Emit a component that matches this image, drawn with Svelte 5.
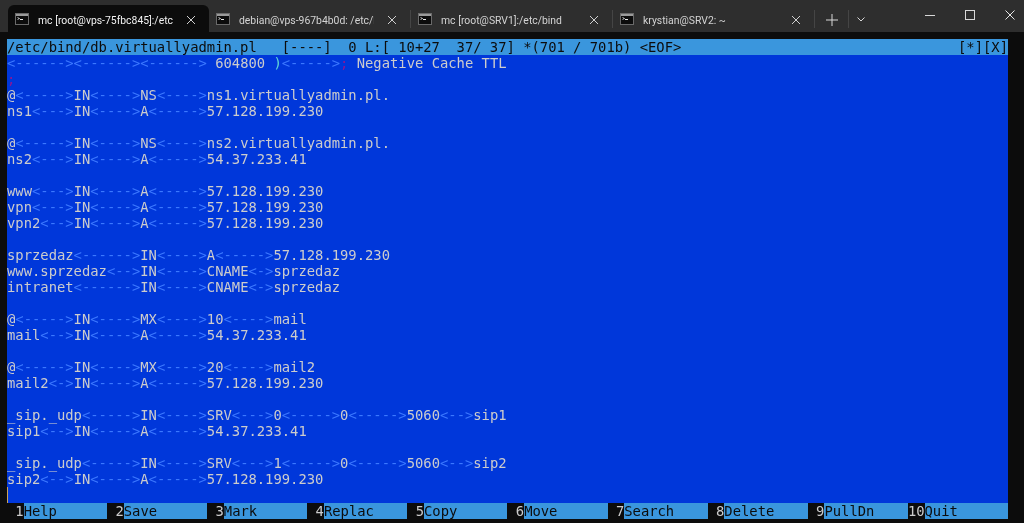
<script>
  const tabs = [
    { title: "mc [root@vps-75fbc845]:/etc/bind", active: true },
    { title: "debian@vps-967b4b0d: /etc/bind" },
    { title: "mc [root@SRV1]:/etc/bind" },
    { title: "krystian@SRV2: ~" },
  ];

  // <---> to tabulatory pokazywane przez edytor mc
  const lines = [
    "<------><------><------> 604800 )<----->; Negative Cache TTL",
    ";",
    "@<----->IN<---->NS<---->ns1.virtuallyadmin.pl.",
    "ns1<--->IN<---->A<----->57.128.199.230",
    "",
    "@<----->IN<---->NS<---->ns2.virtuallyadmin.pl.",
    "ns2<--->IN<---->A<----->54.37.233.41",
    "",
    "www<--->IN<---->A<----->57.128.199.230",
    "vpn<--->IN<---->A<----->57.128.199.230",
    "vpn2<-->IN<---->A<----->57.128.199.230",
    "",
    "sprzedaz<------>IN<---->A<----->57.128.199.230",
    "www.sprzedaz<-->IN<---->CNAME<->sprzedaz",
    "intranet<------>IN<---->CNAME<->sprzedaz",
    "",
    "@<----->IN<---->MX<---->10<---->mail",
    "mail<-->IN<---->A<----->54.37.233.41",
    "",
    "@<----->IN<---->MX<---->20<---->mail2",
    "mail2<->IN<---->A<----->57.128.199.230",
    "",
    "_sip._udp<----->IN<---->SRV<--->0<----->0<----->5060<-->sip1",
    "sip1<-->IN<---->A<----->54.37.233.41",
    "",
    "_sip._udp<----->IN<---->SRV<--->1<----->0<----->5060<-->sip2",
    "sip2<-->IN<---->A<----->57.128.199.230",
  ];

  const keys = ["Help", "Save", "Mark", "Replac", "Copy", "Move", "Search", "Delete", "PullDn", "Quit"];

  function tokens(line) {
    return line.split(/(<-*>|;|\))/).filter(Boolean).map((text) => ({
      text,
      kind: text.startsWith("<") ? "ws" : text === ";" ? "semi" : text === ")" ? "paren" : "",
    }));
  }
</script>

<div class="window">
  <div class="tabbar">
    {#each tabs as tab}
      <div class="tab" class:active={tab.active}>
        <svg class="tab-icon" width="14" height="12" viewBox="0 0 14 12">
          <rect x="0.5" y="0.5" width="13" height="11" fill="#0c0c0c" stroke="#6a6a6a" />
          <rect x="1" y="1" width="12" height="2" fill="#9a9a9a" />
          <path d="M2.5 4.5 L4.5 5.5 L2.5 6.5" fill="none" stroke="#e8e8e8" stroke-width="0.8" />
          <rect x="5" y="6" width="3" height="1" fill="#e8e8e8" />
        </svg>
        <span class="tab-title">{tab.title}</span>
        <svg class="tab-close" width="10" height="10" viewBox="0 0 10 10">
          <path d="M1 1 L9 9 M9 1 L1 9" stroke="#cfcfcf" stroke-width="1" fill="none" />
        </svg>
      </div>
      {#if !tab.active}<span class="sep"></span>{/if}
    {/each}
    <button class="new-tab" aria-label="New tab">
      <svg width="12" height="12" viewBox="0 0 12 12"><path d="M6 0 V12 M0 6 H12" stroke="#d8d8d8" fill="none" /></svg>
    </button>
    <span class="sep"></span>
    <button class="dropdown" aria-label="Open menu">
      <svg width="8" height="5" viewBox="0 0 8 5"><path d="M0.5 0.5 L4 4 L7.5 0.5" stroke="#d8d8d8" fill="none" /></svg>
    </button>
    <div class="controls">
      <svg width="10" height="10" viewBox="0 0 10 10"><path d="M0 5.5 H10" stroke="#d8d8d8" fill="none" /></svg>
      <svg width="10" height="10" viewBox="0 0 10 10"><rect x="0.5" y="0.5" width="9" height="9" stroke="#d8d8d8" fill="none" /></svg>
      <svg width="10" height="10" viewBox="0 0 10 10"><path d="M0.5 0.5 L9.5 9.5 M9.5 0.5 L0.5 9.5" stroke="#e8e8e8" fill="none" /></svg>
    </div>
  </div>

  <div class="term">
    <div class="status">
      <span>/etc/bind/db.virtuallyadmin.pl   [----]  0 L:[ 10+27  37/ 37] *(701 / 701b) &lt;EOF&gt;</span>
      <span>[*][X]</span>
    </div>
    <div class="editor">
      {#each lines as line}
        <div class="row">{#each tokens(line) as t}<span class={t.kind}>{t.text}</span>{/each}</div>
      {/each}
      <div class="row"><span class="cursor"></span></div>
    </div>
    <div class="keys">
      {#each keys as key, i}
        <div class="key">
          <span class="num">{i + 1}</span>
          <span class="label">{key}</span>
        </div>
      {/each}
    </div>
  </div>
</div>

<style>
  :global(body) {
    margin: 0;
    background: #0c0c0c;
  }
  /* zrzut jest lekko rozmyty po skalowaniu */
  .window {
    width: 1024px;
    height: 523px;
    overflow: hidden;
    background: #0c0c0c;
    filter: blur(0.35px);
  }
  .tabbar {
    display: flex;
    align-items: flex-end;
    height: 32px;
    padding-left: 8px;
    background: #2e2e2e;
    font-family: Roboto, "Open Sans", sans-serif;
    font-size: 10.4px;
    color: #d4d4d4;
  }
  .tab {
    flex: none;
    box-sizing: border-box;
    display: flex;
    align-items: center;
    width: 201px;
    height: 27px;
    padding: 0 12px 0 7px;
    border-radius: 6px 6px 0 0;
  }
  .tab.active {
    background: #0c0c0c;
    color: #f2f2f2;
  }
  .tab-icon {
    flex: none;
    margin-right: 9px;
  }
  .tab-title {
    flex: 1;
    min-width: 0;
    margin: 3px 13px 0 0;
    overflow: hidden;
    white-space: nowrap;
  }
  .tab-close {
    flex: none;
    margin: 2px 1px 0 0;
  }
  .sep {
    flex: none;
    width: 1px;
    height: 18px;
    margin-bottom: 4px;
    background: #454545;
  }
  .new-tab,
  .dropdown {
    display: flex;
    align-items: center;
    justify-content: center;
    border: 0;
    padding: 2px 0 0;
    background: none;
    height: 27px;
  }
  .new-tab {
    width: 33px;
  }
  .dropdown {
    width: 24px;
  }
  .controls {
    display: flex;
    align-items: center;
    gap: 30px;
    align-self: flex-start;
    height: 30px;
    margin-left: auto;
    padding-right: 9px;
  }
  .term {
    margin: 7px 16px 0 7px;
    font-family: "DejaVu Sans Mono", monospace;
    font-size: 13.84px;
    line-height: 16px;
    color: #cccccc;
  }
  .status {
    display: flex;
    justify-content: space-between;
    background: #3a96dd;
    color: #0c0c0c;
    white-space: pre;
  }
  .editor {
    background: #0037da;
  }
  .row {
    height: 16px;
    white-space: pre;
  }
  .ws {
    color: #3b78ff;
  }
  .semi {
    color: #881798;
  }
  .paren {
    color: #61d6d6;
  }
  .cursor {
    display: inline-block;
    width: 1px;
    height: 16px;
    background: #c9a25c;
    vertical-align: top;
  }
  .keys {
    display: grid;
    grid-template-columns: repeat(10, 1fr);
  }
  .key {
    display: flex;
  }
  .num {
    flex: none;
    width: 2ch;
    text-align: right;
  }
  .label {
    flex: 1;
    background: #3a96dd;
    color: #0c0c0c;
  }
</style>
